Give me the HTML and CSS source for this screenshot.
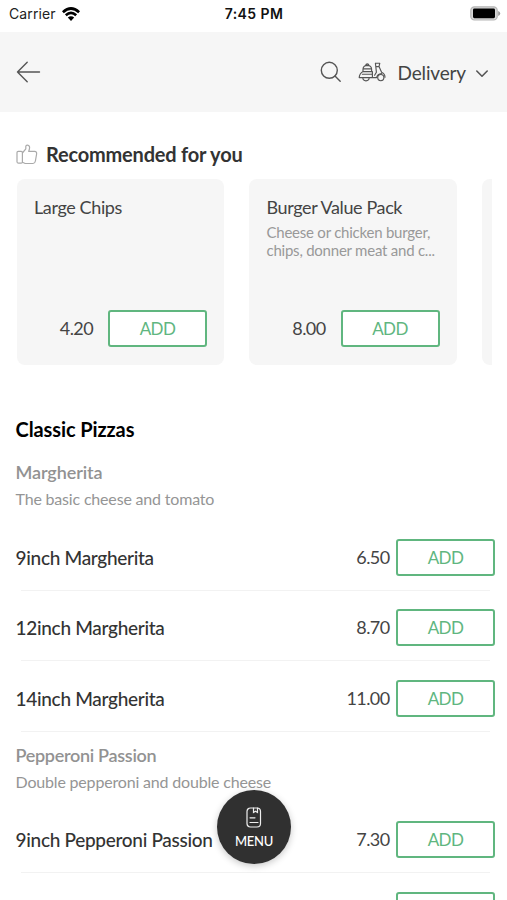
FILE: index.html
```html
<!DOCTYPE html>
<html lang="en">
<head>
<meta charset="utf-8">
<title>Menu</title>
<link rel="stylesheet" href="styles.css">
</head>
<body>
<div class="screen">
  <div class="status">
    <div class="carrier"><span>Carrier</span>
      <svg class="wifi" viewBox="0 0 18 14" width="18" height="14"><g fill="none" stroke="#000" stroke-width="2.7"><path d="M.9 5.2Q9-2.2 17.1 5.2"/><path d="M3.8 8.3Q9 3.6 14.2 8.3"/></g><path d="M5.8 10.6Q9 8 12.2 10.6L9 14Z"/></svg>
    </div>
    <div class="time">7:45 PM</div>
    <svg class="battery" viewBox="0 0 31 15" width="31" height="15"><rect x=".8" y=".8" width="26.4" height="13.2" rx="3.6" fill="#d8d8d8" stroke="#b5b5b5" stroke-width="1.2"/><rect x="3" y="2.6" width="22" height="9.6" rx="1.4"/><path d="M28.2 5q2 .6 2 2.5t-2 2.5z" fill="#999"/></svg>
  </div>
  <header class="header">
    <svg class="back" viewBox="0 0 26 22" width="26" height="22"><path d="M24.5 11H2.5M12.2 1.2L2.5 11l9.7 9.8"/></svg>
    <div class="tools">
      <svg class="search" viewBox="0 0 22 22" width="22" height="22"><circle cx="9.3" cy="9.3" r="8"/><path d="M15 15l5.2 5.2"/></svg>
      <svg class="scooter" viewBox="0 0 28 20" width="28" height="20"><path d="M5 9.6V7Q5.2 3.6 9.3 3.4 13.4 3.6 13.6 7V9.6M7.8 3.2Q8 1.8 9.3 1.8T10.8 3.2M5 6.8h8.6M5 9.6h9.4V15.6M5 9.6Q1.5 11.5 1.2 15.6H13.2L18.4 15.6M4.4 12.2H13.8M4.8 15.6a3.1 3.1 0 0 0 6.4 0M17.4 1.2h4.4L21 4.6 23.6 10.2Q27 11.8 27 15.2M17.4 1.2l.4 3.4h3.2M17.8 4.6L18.4 10.2 16.6 13.2M18.6 15.6Q19.4 12 23.6 11.6"/><circle cx="22.8" cy="15.6" r="3.1"/></svg>
      <span class="mode">Delivery</span>
      <svg class="chevron" viewBox="0 0 14 9" width="14" height="9"><path d="M1.8 2L7 7.2l5.2-5.2"/></svg>
    </div>
  </header>
  <main class="content">
    <h2 class="recommended"><svg class="thumb" viewBox="0 0 22 21" width="22" height="21"><path d="M1 8.5Q1 7.4 2.2 7.4H5.2Q6.4 7.4 6.4 8.5V18Q6.4 19.2 5.2 19.2H2.5Q1.2 19.2 1 18ZM6.4 9L9.8 4.8V2.6Q9.9 1 11.4 1.2 14.3 1.7 13.4 5L12.7 7.4H18.6Q21 7.6 20.6 10L19.4 17Q19 19.3 17 19.5H9.2L6.4 18.2"/></svg><span>Recommended for you</span></h2>
    <div class="cards">
      <article class="card">
        <h3>Large Chips</h3>
        <div class="buy"><span class="price">4.20</span><button class="add">ADD</button></div>
      </article>
      <article class="card">
        <h3>Burger Value Pack</h3>
        <p>Cheese or chicken burger,<br>chips, donner meat and c...</p>
        <div class="buy"><span class="price">8.00</span><button class="add">ADD</button></div>
      </article>
      <article class="card"></article>
    </div>
    <h2 class="category">Classic Pizzas</h2>
    <section class="group">
      <h3>Margherita</h3>
      <p>The basic cheese and tomato</p>
      <div class="item"><span class="name">9inch Margherita</span><span class="price">6.50</span><button class="add">ADD</button></div>
      <div class="item"><span class="name">12inch Margherita</span><span class="price">8.70</span><button class="add">ADD</button></div>
      <div class="item"><span class="name">14inch Margherita</span><span class="price">11.00</span><button class="add">ADD</button></div>
    </section>
    <section class="group">
      <h3>Pepperoni Passion</h3>
      <p>Double pepperoni and double cheese</p>
      <div class="item"><span class="name">9inch Pepperoni Passion</span><span class="price">7.30</span><button class="add">ADD</button></div>
      <div class="item"><span class="name"></span><button class="add"></button></div>
    </section>
  </main>
  <button class="menu">
    <svg viewBox="0 0 16 21" width="16" height="21"><rect x="1" y="1" width="13.5" height="19" rx="3.5"/><path d="M7.5 1v4.5l2-1.3 2 1.3V1M4 10.8h5M4 15.5h8"/></svg>
    <span>MENU</span>
  </button>
</div>
</body>
</html>
```

FILE: styles.css
```css
* { box-sizing: border-box; margin: 0; padding: 0; }
body { font-family: Lato, "Liberation Sans", sans-serif; background: #fff; color: #333; overflow: hidden; }
button { font: inherit; }
svg { display: block; flex: none; }
.screen { position: relative; height: 900px; overflow: hidden; }

.status { height: 32px; padding: 0 6px 5px 9px; display: grid; grid-template-columns: 1fr auto 1fr; align-items: center; font-family: Inter, sans-serif; font-size: 14px; color: #222; }
.carrier { display: flex; align-items: center; gap: 6px; letter-spacing: 0.1px; }
.time { font-weight: 600; color: #111; letter-spacing: 0.4px; margin-right: 2px; }
.battery { justify-self: end; }

.header { height: 80px; background: #f6f6f6; padding: 0 18px 0 15px; display: flex; align-items: center; justify-content: space-between; }
.header svg { fill: none; stroke: #555; stroke-width: 1.4; stroke-linecap: round; stroke-linejoin: round; }
.tools { display: flex; align-items: center; }
.header .scooter { margin: 0 12px 0 16px; stroke-width: 1.15; }
.mode { position: relative; top: 1px; font-size: 19px; line-height: 24px; letter-spacing: -0.15px; color: #444; margin-right: 9px; }
.header .chevron { stroke-width: 1.6; position: relative; top: 1px; }

.content { padding: 30px 0 0 15.5px; }
.recommended { display: flex; align-items: center; gap: 8.5px; font-size: 20px; line-height: 25px; font-weight: 700; letter-spacing: -0.2px; color: #333; }
.thumb { fill: none; stroke: #aaa; stroke-width: 1.2; stroke-linejoin: round; }
.cards { display: flex; gap: 25px; margin: 12px 15px 0 1px; overflow: hidden; }
.card { flex: none; width: 207.5px; height: 186px; border-radius: 8px; background: #f6f6f6; padding: 17px 17px 18px 17.5px; display: flex; flex-direction: column; }
.card h3 { font-size: 18px; line-height: 23px; font-weight: 400; letter-spacing: -0.38px; color: #444; }
.card p { margin-top: 4px; font-size: 15px; line-height: 18px; letter-spacing: -0.23px; color: #999; white-space: nowrap; }
.buy { margin-top: auto; display: flex; align-items: center; justify-content: flex-end; gap: 15px; }
.price { font-size: 18px; line-height: 23px; letter-spacing: -0.6px; color: #444; }
.add { width: 99px; height: 37px; border: 2px solid #60b67f; border-radius: 3px; background: #fff; color: #60b67f; font-size: 17px; line-height: 33px; letter-spacing: -0.6px; text-align: center; }

.category { margin-top: 51px; font-size: 20px; line-height: 26px; font-weight: 700; letter-spacing: -0.1px; color: #000; }
.group { padding-top: 10.5px; }
.category + .group { padding-top: 18px; }
.group h3 { font-size: 18px; line-height: 24px; font-weight: 600; letter-spacing: -0.3px; color: #929292; }
.category + .group h3 { letter-spacing: -0.1px; }
.group p { margin-top: 3px; font-size: 16px; line-height: 24px; letter-spacing: -0.18px; color: #959595; }
.item { height: 70.6px; padding: 3px 12px 0 0; display: flex; align-items: center; background: linear-gradient(#f2f2f2, #f2f2f2) 5px 100% / calc(100% - 22px) 1px no-repeat; }
.group p + .item { margin-top: 9.3px; }
.name { flex: 1; padding-top: 1px; font-size: 19px; line-height: 24px; font-weight: 500; letter-spacing: -0.3px; color: #333; }
.item .add { margin-left: 6.5px; }

.menu { position: absolute; left: 217px; top: 790px; width: 74px; height: 74px; border: 0; border-radius: 50%; background: #303030; color: #fff; box-shadow: 0 2px 7px rgba(0,0,0,.22); display: flex; flex-direction: column; align-items: center; justify-content: center; gap: 5px; padding-top: 2px; font-size: 13px; line-height: 16px; font-weight: 500; letter-spacing: -0.3px; }
.menu svg { fill: none; stroke: #eee; stroke-width: 1.2; stroke-linecap: round; }
```
